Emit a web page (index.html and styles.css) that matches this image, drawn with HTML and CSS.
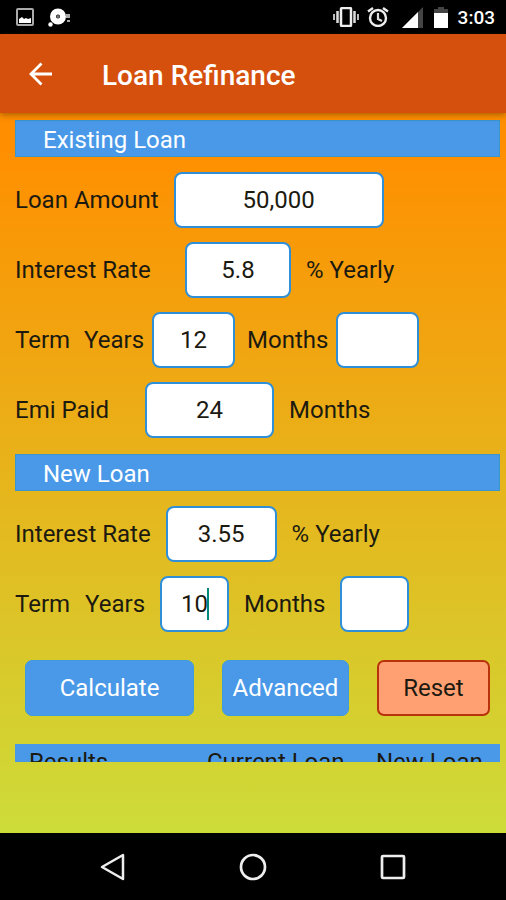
FILE: index.html
```
<!DOCTYPE html>
<html lang="en">
<head>
  <meta charset="UTF-8">
  <meta name="viewport" content="width=device-width, initial-scale=1">
  <title>Loan Refinance</title>
  <link rel="stylesheet" href="styles.css">
</head>
<body>
<div class="status-bar">
  <svg width="18" height="18" viewBox="0 0 18 18">
    <rect x="1" y="1" width="16" height="16" rx="1" fill="none" stroke="#aaa" stroke-width="2"/>
    <path d="M3 15v-4l3-2 2 2 2-1 2 1 3-1v5z" fill="#fff"/>
  </svg>
  <svg class="disc" width="22" height="19" viewBox="0 0 22 19">
    <circle cx="10" cy="8.500" r="5" fill="none" stroke="#fff" stroke-width="6"/>
    <circle cx="10" cy="8.500" r="1.500" fill="#777"/>
    <circle cx="2.500" cy="16.500" r="2.200" fill="#fff"/>
    <path d="M17 7h5M18 9h4M19 13h3" stroke="#aaa" stroke-width="2"/>
  </svg>
  <span class="spacer"></span>
  <svg width="26" height="20" viewBox="0 0 26 20">
    <rect x="8" y="1" width="10" height="18" rx="1" fill="none" stroke="#eee" stroke-width="2.500"/>
    <path d="M4.500 4v12M21.500 4v12" stroke="#ddd" stroke-width="2.500"/>
    <path d="M1 7v6M25 7v6" stroke="#bbb" stroke-width="2"/>
  </svg>
  <svg class="alarm" width="22" height="20" viewBox="0 0 22 20">
    <circle cx="11" cy="11" r="8" fill="none" stroke="#eee" stroke-width="2.400"/>
    <path d="M1 4.500l5-3.500M21 4.500l-5-3.500" stroke="#eee" stroke-width="2.400"/>
    <path d="M11 6v6l4 2" fill="none" stroke="#ddd" stroke-width="2.200"/>
  </svg>
  <svg class="signal" width="22" height="21" viewBox="0 0 22 21">
    <path d="M0 21L21 0v21z" fill="#444"/>
    <path d="M0 21L16 5v16z" fill="#fff"/>
  </svg>
  <svg class="battery" width="14" height="21" viewBox="0 0 14 21">
    <path d="M0 6V2h4V0h6v2h4v4z" fill="#444"/>
    <path d="M0 6h14v15H0z" fill="#fff"/>
  </svg>
  <span class="clock">3:03</span>
</div>

<header class="app-bar">
  <button class="back" type="button" aria-label="Back">
    <svg width="24" height="24" viewBox="0 0 24 24" fill="none" stroke="#fff" stroke-width="2.800">
      <path d="M24 12H3M13.500 1.500L3 12l10.500 10.500"/>
    </svg>
  </button>
  <h1>Loan Refinance</h1>
</header>

<main>
  <form class="scroll">
    <h2>Existing Loan</h2>
    <div class="row">
      <label for="amount">Loan Amount</label>
      <input class="w-amount" id="amount" type="text" value="50,000">
    </div>
    <div class="row">
      <label class="label-rate" for="rate">Interest Rate</label>
      <input class="w-rate" id="rate" type="text" value="5.8">
      <span>% Yearly</span>
    </div>
    <div class="row tight">
      <span class="term">Term</span>
      <label for="years">Years</label>
      <input class="w-term" id="years" type="text" value="12">
      <label for="months">Months</label>
      <input class="w-term" id="months" type="text">
    </div>
    <div class="row">
      <label class="label-emi" for="emi">Emi Paid</label>
      <input class="w-emi" id="emi" type="text" value="24">
      <span>Months</span>
    </div>

    <h2>New Loan</h2>
    <div class="row">
      <label for="new-rate">Interest Rate</label>
      <input class="w-new-rate" id="new-rate" type="text" value="3.55">
      <span>% Yearly</span>
    </div>
    <div class="row">
      <span>Term</span>
      <label for="new-years">Years</label>
      <span class="active-field">
        <input class="w-new-term" id="new-years" type="text" value="10">
        <span class="caret"></span>
      </span>
      <label for="new-months">Months</label>
      <input class="w-new-term" id="new-months" type="text">
    </div>

    <div class="buttons">
      <button class="calculate" type="button">Calculate</button>
      <button class="advanced" type="button">Advanced</button>
      <button class="reset" type="reset">Reset</button>
    </div>

    <table>
      <thead>
        <tr>
          <th>Results</th>
          <th>Current Loan</th>
          <th>New Loan</th>
        </tr>
      </thead>
    </table>
  </form>
</main>

<nav class="nav-bar">
  <button type="button" aria-label="Back">
    <svg width="28" height="28" viewBox="0 0 28 28"><path d="M24 2v24L3 14z" fill="none" stroke="#eee" stroke-width="2.500" stroke-linejoin="round"/></svg>
  </button>
  <button type="button" aria-label="Home">
    <svg width="28" height="28" viewBox="0 0 28 28"><circle cx="14" cy="14" r="12" fill="none" stroke="#eee" stroke-width="2.700"/></svg>
  </button>
  <button type="button" aria-label="Recent apps">
    <svg width="28" height="28" viewBox="0 0 28 28"><rect x="3" y="3" width="22" height="22" rx="1" fill="none" stroke="#eee" stroke-width="2.700"/></svg>
  </button>
</nav>
</body>
</html>
```
FILE: styles.css
```
* {
  box-sizing: border-box;
}
body {
  margin: 0;
  height: 100vh;
  display: flex;
  flex-direction: column;
  font-family: Roboto, sans-serif;
  font-size: 24px;
  line-height: 28px;
  color: #1c1a10;
  background: #000;
}
button, input {
  font: inherit;
  color: inherit;
}
.status-bar {
  display: flex;
  align-items: center;
  flex: none;
  height: 34px;
  padding: 0 11px 0 16px;
  color: #fff;
}
.disc {
  margin-left: 14px;
}
.spacer {
  flex: 1;
}
.alarm {
  margin-left: 8px;
}
.signal {
  margin-left: 13px;
}
.battery {
  margin-left: 10px;
}
.clock {
  margin-left: 10px;
  padding-top: 2px;
  font-size: 19px;
  font-weight: 500;
}
.app-bar {
  display: flex;
  align-items: center;
  flex: none;
  height: 79px;
  padding: 0 28px;
  gap: 50px;
  background: #d5500c;
  color: #fff;
  box-shadow: 0 2px 6px rgba(90, 50, 0, 0.5);
  z-index: 1;
}
.app-bar h1 {
  margin: 0;
  padding-top: 4px;
  font-size: 28px;
  font-weight: 500;
}
.back {
  display: flex;
  padding: 0;
  border: 0;
  background: none;
}
main {
  flex: 1;
  min-height: 0;
  display: flex;
  padding: 7px 6px 71px 15px;
  background: linear-gradient(#ff8f00 5%, #cddc39);
}
.scroll {
  flex: 1;
  overflow: hidden;
}
h2 {
  margin: 16px 0 15px;
  padding: 6px 27px 3px;
  font-size: 24px;
  font-weight: 400;
  background: #4999e8;
  border: 1px solid #3b96cc;
  line-height: 26px;
  color: #fff;
}
h2:first-child {
  margin-top: 0;
}
.row {
  display: flex;
  align-items: center;
  gap: 15px;
  height: 56px;
  margin-bottom: 14px;
  white-space: nowrap;
}
.tight {
  gap: 8px;
}
.tight input {
  margin-right: 4px;
}
.term {
  margin-right: 6px;
}
.label-rate {
  width: 155px;
}
.label-emi {
  width: 115px;
}
input {
  height: 56px;
  padding: 0;
  text-align: center;
  background: #fff;
  border: 2px solid #2f8fd8;
  border-radius: 8px;
  outline: 0;
}
.w-amount {
  width: 210px;
}
.w-rate {
  width: 106px;
}
.w-term {
  width: 83px;
}
.w-emi {
  width: 129px;
}
.w-new-rate {
  width: 111px;
}
.w-new-term {
  width: 69px;
}
.active-field {
  position: relative;
  display: flex;
}
.caret {
  position: absolute;
  top: 12px;
  left: 47px;
  width: 2px;
  height: 32px;
  background: #00897b;
}
.buttons {
  display: flex;
  justify-content: space-between;
  gap: 28px;
  margin: 28px 10px;
}
.buttons button {
  height: 56px;
  padding: 0;
  border: 1px solid #3f9bd9;
  border-radius: 7px;
  background: #4999e8;
  color: #fff;
}
.buttons .calculate {
  flex: 170;
}
.buttons .advanced {
  flex: 127;
}
.buttons .reset {
  flex: 111;
  border: 2px solid #b8330b;
  background: #ffa073;
  color: #1c1a10;
}
table {
  width: 100%;
  border-collapse: collapse;
  table-layout: fixed;
  background: #4999e8;
}
th {
  padding: 4px 0 4px 14px;
  text-align: left;
  font-weight: 400;
  white-space: nowrap;
}
th:first-child {
  width: 178px;
}
th:nth-child(2) {
  width: 169px;
}
.nav-bar {
  display: flex;
  justify-content: center;
  align-items: center;
  flex: none;
  height: 67px;
  gap: 112px;
}
.nav-bar button {
  display: flex;
  padding: 0;
  border: 0;
  background: none;
}
```
